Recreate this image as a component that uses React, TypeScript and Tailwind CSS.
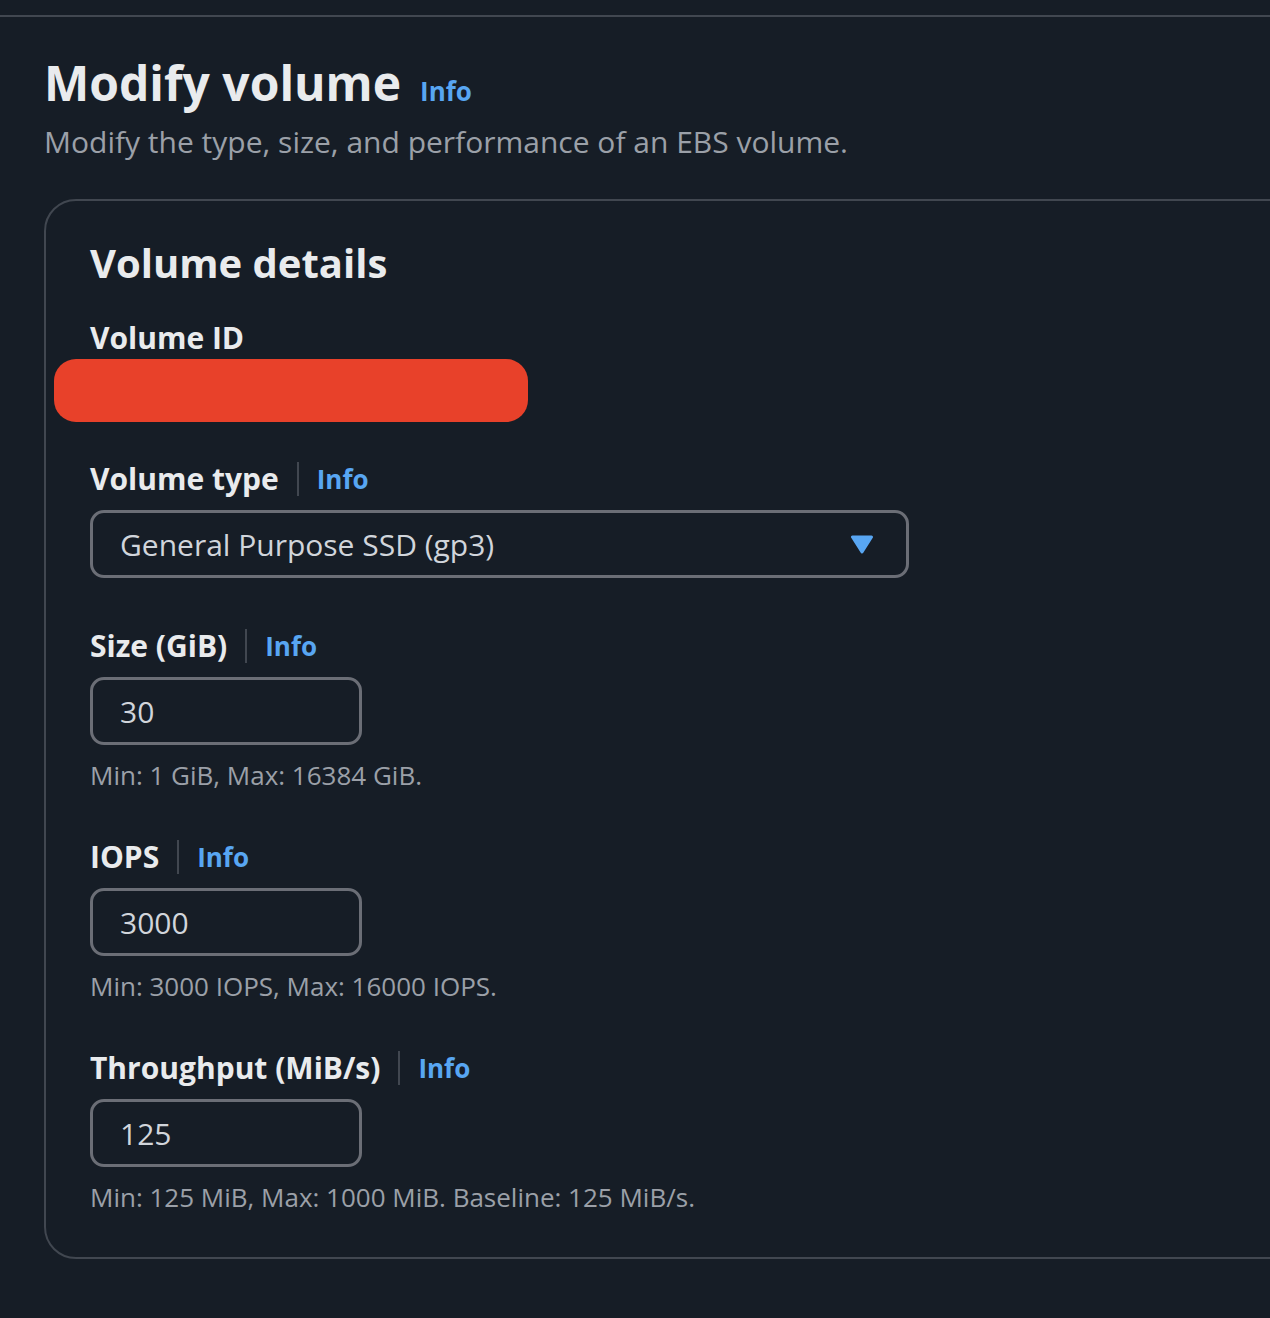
const font = "font-['Open_Sans',sans-serif]";

function InfoLink() {
  return <span className="text-[26px] font-bold leading-[34px] text-[#58a6f2]">Info</span>;
}

function FieldLabel({ label, info = true }: { label: string; info?: boolean }) {
  return (
    <div className="flex items-center">
      <span className="text-[30px] font-bold leading-[36px] text-[#e9ebed]">{label}</span>
      {info && (
        <>
          <span className="ml-[18px] mr-[18px] h-[34px] w-[2px] bg-[#414750]" />
          <InfoLink />
        </>
      )}
    </div>
  );
}

function NumberField({ label, value, hint }: { label: string; value: string; hint: string }) {
  return (
    <div className="flex flex-col">
      <FieldLabel label={label} />
      <div className="mt-[13px] flex h-[68px] w-[272px] items-center rounded-[14px] border-[3px] border-[#6b6e76] pl-[27px] text-[30px] text-[#d1d5db]">
        {value}
      </div>
      <p className="mt-[14px] text-[26px] leading-[32px] text-[#9ba0a8]">{hint}</p>
    </div>
  );
}

export default function App() {
  return (
    <div className={`min-h-screen overflow-hidden bg-[#161d26] pt-[15px] ${font}`}>
      <div className="h-[2px] bg-[#414750]" />
      <div className="pl-[44px]">
        <div className="mt-[36px] flex items-baseline gap-[19px]">
          <h1 className="text-[48px] font-bold leading-[60px] text-[#e9ebed]">Modify volume</h1>
          <InfoLink />
        </div>
        <p className="mt-[10px] text-[30px] leading-[38px] text-[#9ba0a8]">
          Modify the type, size, and performance of an EBS volume.
        </p>

        <div className="mt-[38px] w-[1300px] rounded-[32px] border-2 border-[#414750] pb-[44px] pl-[44px] pt-[36px]">
          <h2 className="text-[40px] font-bold leading-[52px] text-[#e9ebed]">Volume details</h2>

          <div className="mt-[31px]">
            <FieldLabel label="Volume ID" info={false} />
            <div className="ml-[-36px] mt-[3px] h-[63px] w-[474px] rounded-[22px] bg-[#e8412a]" />
          </div>

          <div className="mt-[39px]">
            <FieldLabel label="Volume type" />
            <div className="mt-[13px] flex h-[68px] w-[819px] items-center justify-between rounded-[14px] border-[3px] border-[#6b6e76] pl-[27px] pr-[32px] text-[30px] text-[#d1d5db]">
              <span>General Purpose SSD (gp3)</span>
              <svg width="24" height="19" viewBox="0 0 24 19">
                <path d="M2.5 2h19L12 17z" fill="#58a6f2" stroke="#58a6f2" strokeWidth="3" strokeLinejoin="round" />
              </svg>
            </div>
          </div>

          <div className="mt-[50px] flex flex-col gap-[48px]">
            <NumberField label="Size (GiB)" value="30" hint="Min: 1 GiB, Max: 16384 GiB." />
            <NumberField label="IOPS" value="3000" hint="Min: 3000 IOPS, Max: 16000 IOPS." />
            <NumberField
              label="Throughput (MiB/s)"
              value="125"
              hint="Min: 125 MiB, Max: 1000 MiB. Baseline: 125 MiB/s."
            />
          </div>
        </div>
      </div>
    </div>
  );
}
